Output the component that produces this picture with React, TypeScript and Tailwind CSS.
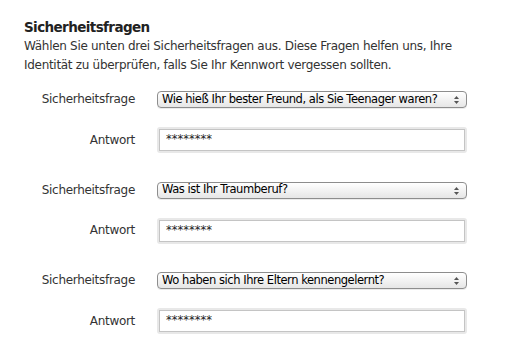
import React from "react";

const groups = [
  "Wie hieß Ihr bester Freund, als Sie Teenager waren?",
  "Was ist Ihr Traumberuf?",
  "Wo haben sich Ihre Eltern kennengelernt?",
];

function SelectBox({ text }: { text: string }) {
  return (
    <div className="relative flex h-[17px] w-[310px] items-center rounded-[4px] border border-[#8d8d8d] bg-gradient-to-b from-[#ffffff] to-[#e6e6e6] pl-[4px] text-[11.5px] leading-none tracking-[-0.45px] text-black shadow-[0_1px_0_rgba(0,0,0,0.08)]">
      <span className="whitespace-nowrap">{text}</span>
      <svg className="absolute right-[7px] top-[4px]" width="5" height="8" viewBox="0 0 5 8">
        <path d="M2.5 0 L5 3 L0 3 Z" fill="#555" />
        <path d="M2.5 8 L5 5 L0 5 Z" fill="#555" />
      </svg>
    </div>
  );
}

function PasswordBox() {
  return (
    <div className="w-[310px] rounded-[3px] bg-[#e8e8e8] p-[2px]">
      <div className="flex h-[22px] items-center border border-[#c4c4c4] bg-white pl-[6px] text-[11.5px] text-[#222]">
        ********
      </div>
    </div>
  );
}

export default function App() {
  return (
    <div className="h-[363px] w-[509px] bg-white pl-[24px] pt-[17px]" style={{ fontFamily: '"DejaVu Sans", sans-serif' }}>
      <h1 className="text-[13.5px] font-bold leading-[20px] tracking-[-0.6px] text-[#222]">Sicherheitsfragen</h1>
      <p className="w-[450px] text-[12px] leading-[18.5px] tracking-[-0.3px] text-[#333]">
        Wählen Sie unten drei Sicherheitsfragen aus. Diese Fragen helfen uns, Ihre Identität zu überprüfen, falls Sie Ihr Kennwort vergessen sollten.
      </p>
      <div className="mt-[17px] flex flex-col gap-[28.5px]">
        {groups.map((g) => (
          <div key={g} className="flex flex-col gap-[19px]">
            <div className="flex items-center gap-[22px]">
              <div className="w-[111px] text-right text-[12px] leading-[17px] tracking-[-0.3px] text-[#333]">Sicherheitsfrage</div>
              <SelectBox text={g} />
            </div>
            <div className="flex items-center gap-[22px]">
              <div className="w-[111px] text-right text-[12px] leading-[17px] tracking-[-0.3px] text-[#333]">Antwort</div>
              <PasswordBox />
            </div>
          </div>
        ))}
      </div>
    </div>
  );
}
